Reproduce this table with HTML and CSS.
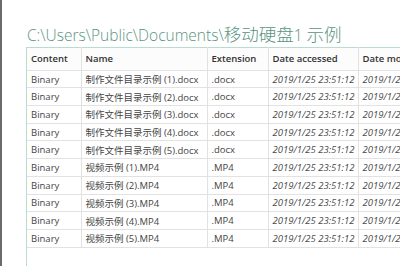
FILE: index.html
```html
<!DOCTYPE html>
<html lang="zh">
<head>
<meta charset="utf-8">
<title>移动硬盘1 示例</title>
<link rel="stylesheet" href="styles.css">
</head>
<body>
<div class="page">
  <h1 class="title">C:\Users\Public\Documents\<span class="cjk">移动硬盘</span>1 <span class="cjk">示例</span></h1>
  <div class="grid-wrap">
    <table class="grid">
      <colgroup>
        <col class="c-content">
        <col class="c-name">
        <col class="c-ext">
        <col class="c-date">
        <col class="c-date2">
      </colgroup>
      <thead>
        <tr><th>Content</th><th>Name</th><th>Extension</th><th>Date accessed</th><th>Date modified</th></tr>
      </thead>
      <tbody>
        <tr><td>Binary</td><td>制作文件目录示例 (1).docx</td><td>.docx</td><td class="dt">2019/1/25 23:51:12</td><td class="dt">2019/1/25 23:51:12</td></tr>
        <tr><td>Binary</td><td>制作文件目录示例 (2).docx</td><td>.docx</td><td class="dt">2019/1/25 23:51:12</td><td class="dt">2019/1/25 23:51:12</td></tr>
        <tr><td>Binary</td><td>制作文件目录示例 (3).docx</td><td>.docx</td><td class="dt">2019/1/25 23:51:12</td><td class="dt">2019/1/25 23:51:12</td></tr>
        <tr><td>Binary</td><td>制作文件目录示例 (4).docx</td><td>.docx</td><td class="dt">2019/1/25 23:51:12</td><td class="dt">2019/1/25 23:51:12</td></tr>
        <tr><td>Binary</td><td>制作文件目录示例 (5).docx</td><td>.docx</td><td class="dt">2019/1/25 23:51:12</td><td class="dt">2019/1/25 23:51:12</td></tr>
        <tr><td>Binary</td><td>视频示例 (1).MP4</td><td>.MP4</td><td class="dt">2019/1/25 23:51:12</td><td class="dt">2019/1/25 23:51:12</td></tr>
        <tr><td>Binary</td><td>视频示例 (2).MP4</td><td>.MP4</td><td class="dt">2019/1/25 23:51:12</td><td class="dt">2019/1/25 23:51:12</td></tr>
        <tr><td>Binary</td><td>视频示例 (3).MP4</td><td>.MP4</td><td class="dt">2019/1/25 23:51:12</td><td class="dt">2019/1/25 23:51:12</td></tr>
        <tr><td>Binary</td><td>视频示例 (4).MP4</td><td>.MP4</td><td class="dt">2019/1/25 23:51:12</td><td class="dt">2019/1/25 23:51:12</td></tr>
        <tr><td>Binary</td><td>视频示例 (5).MP4</td><td>.MP4</td><td class="dt">2019/1/25 23:51:12</td><td class="dt">2019/1/25 23:51:12</td></tr>
      </tbody>
    </table>
  </div>
</div>
</body>
</html>
```
FILE: styles.css
```css
html, body {
  margin: 0;
  height: 100%;
}
body {
  background: #ffffff;
  overflow: hidden;
}
.page {
  height: 266px;
  box-sizing: border-box;
  border-left: 2px solid #6b6b6b;
  padding-left: 24px;
  display: flex;
  flex-direction: column;
}
.title {
  margin: 20px 0 0 1px;
  height: 27px;
  font: 300 15.5px/27px "Open Sans", "Noto Sans CJK SC", sans-serif;
  color: #5a9383;
  white-space: nowrap;
}
.title .cjk {
  font-family: "Noto Sans CJK SC", sans-serif;
  font-weight: 300;
  font-size: 17.5px;
}
.grid-wrap {
  flex: 1;
  border-left: 1px solid #b9dccf;
  overflow: hidden;
}
.grid {
  border-collapse: collapse;
  table-layout: fixed;
  width: 430px;
  font-family: "Open Sans", "Noto Sans CJK SC", sans-serif;
  font-size: 9.5px;
  color: #444444;
}
.c-content { width: 54px; }
.c-name { width: 126px; }
.c-ext { width: 61px; }
.c-date { width: 90px; }
.c-date2 { width: 99px; }
.grid th, .grid td {
  padding: 0 0 0 4px;
  text-align: left;
  white-space: nowrap;
  overflow: hidden;
  border-right: 1px solid #e2e2e2;
  border-bottom: 1px solid #e2e2e2;
}
.grid th {
  height: 21.7px;
  font-weight: 600;
  color: #333333;
  border-top: 1px solid #b9dccf;
  background: #fcfcfc;
}
.grid td {
  height: 16.7px;
}
.grid .dt {
  font-style: italic;
  color: #4a4a4a;
}
```
